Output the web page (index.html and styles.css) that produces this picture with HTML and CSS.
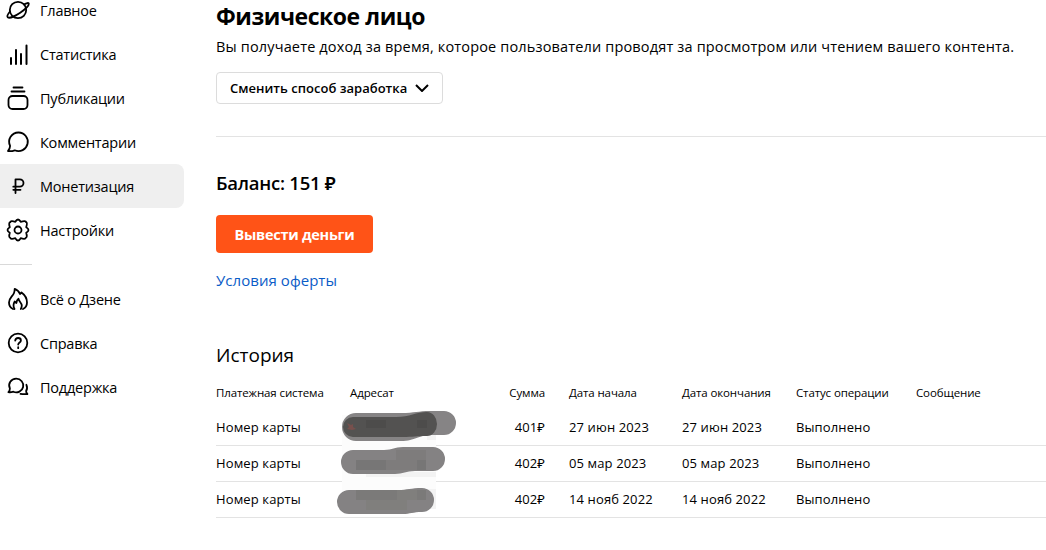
FILE: index.html
```html
<!DOCTYPE html>
<html lang="ru">
<head>
  <meta charset="UTF-8" />
  <meta name="viewport" content="width=device-width, initial-scale=1.0"/>
  <title>Монетизация</title>
  <link rel="stylesheet" href="styles.css">
</head>
<body>

  <nav class="sidebar">
    <a class="menu-item">
      <svg class="icon" viewBox="0 0 24 24"><circle cx="12" cy="12" r="8.2"/><path d="M18 6.500c2.600-1.700 4.700-2 4.800-.7.100 2-3.700 5.600-8.600 8.900-5.400 3.600-11 5.900-12.400 4.600-1-.9 0-3.200 2.200-5.800"/></svg>
      <span>Главное</span>
    </a>
    <a class="menu-item">
      <svg class="icon icon-bars" viewBox="0 0 24 24"><path d="M5 16v6M10 8v14M15 12v10M20.500 3.500v18.500"/></svg>
      <span>Статистика</span>
    </a>
    <a class="menu-item">
      <svg class="icon" viewBox="0 0 24 24"><path d="M7.500 1.500h9M5.500 5.500h13"/><rect x="2.500" y="10" width="19" height="13" rx="4"/></svg>
      <span>Публикации</span>
    </a>
    <a class="menu-item">
      <svg class="icon" viewBox="0 0 24 24"><path d="M12.600 2.500a9.300 9.300 0 1 1-3.900 17.800C6.800 21 4.500 21.500 2 21c1.600-1.500 2-3.200 2.100-5.100A9.300 9.300 0 0 1 12.600 2.500z"/></svg>
      <span>Комментарии</span>
    </a>
    <a class="menu-item active">
      <svg class="icon" viewBox="0 0 24 24"><path d="M9.500 19V5.300h4.300a3.700 3.700 0 0 1 0 7.400H7.300M7.300 15.800H14.500"/></svg>
      <span>Монетизация</span>
    </a>
    <a class="menu-item">
      <svg class="icon" viewBox="0 0 24 24"><circle cx="12" cy="12" r="3.500"/><path d="M9.300 3.800Q12-.8 14.700 3.800 19.800 2.400 20.200 4.200 21.600 4.700 20.200 9.300 24.800 12 20.200 14.700 21.600 19.300 19.800 19.800 19.300 21.600 14.700 20.200 12 24.800 9.300 20.200 4.700 21.600 4.200 19.800 2.400 19.300 3.800 14.700-.8 12 3.800 9.300 2.400 4.700 4.200 4.200 4.700 2.400 9.300 3.800z"/></svg>
      <span>Настройки</span>
    </a>

    <hr class="menu-divider">

    <a class="menu-item">
      <svg class="icon" viewBox="0 0 24 24"><path d="M7 22c-3-1.500-4-3.500-4-6.500 0-4.500 3.500-6 5-9.500C8.700 4.300 8.700 3 8.700 1.800c2.500 1 4.300 2.700 5.300 5.200l1.500-1.500c3.500 2.500 5.500 6 5.500 10 0 3-1 5-4 6.500"/><path d="M8.500 22c-1.700-3-1-5.500.2-7.500l1.700 1.500c.1-2 .9-3.300 2.100-4.200.2 2.500 3.300 4 3.300 6.700 0 1.500-.4 2.500-1 3.500"/></svg>
      <span>Всё о Дзене</span>
    </a>
    <a class="menu-item">
      <svg class="icon" viewBox="0 0 24 24"><circle cx="12" cy="12" r="9.300"/><path d="M9.200 9.700c.2-1.900 1.300-2.700 2.900-2.700 1.700 0 2.800.9 2.800 2.400 0 2-2.700 2.200-2.700 4.200M12.200 16.200v1"/></svg>
      <span>Справка</span>
    </a>
    <a class="menu-item">
      <svg class="icon" viewBox="0 0 24 24"><path d="M10.300 3.700a7 6.800 0 1 1-2.900 13c-1.700.5-3.300.8-5 .4 1.200-1 1.500-2.200 1.500-3.600A7 6.800 0 0 1 10.300 3.700z"/><path d="M20.400 9.800c1 2.200.9 4.300-.3 6.200 0 1.200.5 2.200 1.300 3-2.300.3-4.600.2-6.900-.2"/></svg>
      <span>Поддержка</span>
    </a>
  </nav>

  <main class="content">
    <h1>Физическое лицо</h1>
    <p class="lead">Вы получаете доход за время, которое пользователи проводят за просмотром или чтением вашего контента.</p>
    <button class="btn-select">
      <span>Сменить способ заработка</span>
      <svg class="chevron" viewBox="0 0 14 8"><path d="M1 1l6 6 6-6"/></svg>
    </button>

    <section class="balance">
      <h2>Баланс: 151 ₽</h2>
      <button class="btn-withdraw">Вывести деньги</button>
      <a class="offer">Условия оферты</a>
    </section>

    <section class="history">
      <h3>История</h3>
      <div class="table-wrap">
        <table>
          <colgroup>
            <col class="col-system"><col class="col-address"><col class="col-sum"><col class="col-start"><col class="col-end"><col class="col-status"><col>
          </colgroup>
          <thead>
            <tr>
              <th>Платежная система</th>
              <th>Адресат</th>
              <th class="sum">Сумма</th>
              <th>Дата начала</th>
              <th>Дата окончания</th>
              <th>Статус операции</th>
              <th>Сообщение</th>
            </tr>
          </thead>
          <tbody>
            <tr>
              <td>Номер карты</td><td></td><td class="sum">401₽</td>
              <td>27 июн 2023</td><td>27 июн 2023</td><td>Выполнено</td><td></td>
            </tr>
            <tr>
              <td>Номер карты</td><td></td><td class="sum">402₽</td>
              <td>05 мар 2023</td><td>05 мар 2023</td><td>Выполнено</td><td></td>
            </tr>
            <tr>
              <td>Номер карты</td><td></td><td class="sum">402₽</td>
              <td>14 нояб 2022</td><td>14 нояб 2022</td><td>Выполнено</td><td></td>
            </tr>
          </tbody>
        </table>

        <!-- hidden card numbers -->
        <svg class="mask" viewBox="0 0 130 110">
          <path fill="#fcfcfc" d="M12 10h94v94H12z"/>
          <path fill="#f3f3f3" d="M97 22h9v13h-9zM36 67h70v5H36zM97 84h9v20h-9z"/>
          <path fill="#868485" d="M26 8h45c14 0 17-2 29-2h14a12 12 0 0 1 0 24h-14c-12 0-14 6-29 6H26a14 14 0 0 1 0-28z"/>
          <path fill="#535251" d="M23 12h43c14 0 20-5 31-5a10 12 0 0 1 0 24c-11 0-13 1-25 1H23a10 10 0 0 1 0-20z"/>
          <path fill="#4d4c4b" d="M36 15h20v8H36zM87 15h10v8H87z"/>
          <path fill="#77504d" d="M17 18l4 2 2-1v3l3 2-4 1-5-1 2-2z"/>
          <path fill="#848283" d="M23 45h31c9 0 10-3 19-3h30a12 12 0 0 1 0 24H85c-9 0-12 3-20 3H23a12 12 0 0 1 0-24z"/>
          <path fill="#777676" d="M26 55h30v10H26zM87 55h9v10h-9z"/>
          <path fill="#7e7c7c" d="M56 55h31v10H56zM66 45h30v10H66z"/>
          <path fill="#848283" d="M19 85h49c9 0 13-2 24-2a12 12 0 0 1 0 24c-9 0-12 2-19 2H19a12 12 0 0 1 0-24z"/>
          <path fill="#7b7a79" d="M26 85h41v10H26zM87 85h9v10h-9z"/>
          <path fill="#807f7d" d="M36 95h41v10H36zM67 85h20v10H67z"/>
        </svg>
      </div>
    </section>
  </main>

</body>
</html>
```
FILE: styles.css
```css
* {
  box-sizing: border-box;
}

body {
  margin: 0;
  height: 550px;
  overflow: hidden;
  display: flex;
  align-items: flex-start;
  background: #fff;
  color: #000;
  font-family: 'Open Sans', 'Noto Sans', sans-serif;
  font-size: 15px;
}

/* Sidebar */
.sidebar {
  width: 184px;
  flex-shrink: 0;
  margin-top: -12px;
}

.menu-item {
  display: flex;
  align-items: center;
  gap: 10px;
  height: 44px;
  padding-left: 6px;
  font-size: 14.5px;
  letter-spacing: -0.22px;
  white-space: nowrap;
}

.menu-item.active {
  background: #efefef;
  border-radius: 0 8px 8px 0;
}

.icon {
  width: 24px;
  height: 24px;
  flex-shrink: 0;
  fill: none;
  stroke: #000;
  stroke-width: 1.8;
  stroke-linecap: round;
  stroke-linejoin: round;
  overflow: visible;
}

.icon-bars {
  stroke-width: 2;
}

.menu-divider {
  width: 32px;
  height: 1px;
  margin: 12px 0;
  border: none;
  background: #d9d9d9;
}

/* Content */
.content {
  flex: 1;
  margin-left: 32px;
  white-space: nowrap;
}

h1, h2, h3, p {
  margin: 0;
}

h1 {
  height: 32px;
  line-height: 32px;
  font-size: 23px;
  font-weight: 700;
  letter-spacing: -0.45px;
}

.lead {
  height: 28px;
  line-height: 30px;
  font-size: 14.5px;
  letter-spacing: 0.16px;
}

button {
  display: flex;
  align-items: center;
  font-family: inherit;
  cursor: pointer;
}

.btn-select {
  justify-content: space-between;
  width: 227px;
  height: 32px;
  margin-top: 12px;
  padding: 0 13px;
  background: #fff;
  color: #000;
  border: 1px solid #dcdcdc;
  border-radius: 4px;
  font-size: 13px;
  font-weight: 600;
  letter-spacing: 0.02px;
}

.chevron {
  width: 14px;
  height: 8px;
  fill: none;
  stroke: #000;
  stroke-width: 2;
}

.balance {
  margin-top: 32px;
  padding-top: 32px;
  border-top: 1px solid #e3e3e3;
}

h2 {
  height: 28px;
  line-height: 28px;
  font-size: 18.5px;
  font-weight: 600;
  letter-spacing: -0.25px;
}

.btn-withdraw {
  justify-content: center;
  width: 157px;
  height: 38px;
  margin-top: 18px;
  padding: 0;
  background: #ff5317;
  color: #fff;
  border: none;
  border-radius: 4px;
  font-size: 14.5px;
  font-weight: 700;
  letter-spacing: -0.25px;
}

.offer {
  display: block;
  height: 24px;
  margin-top: 16px;
  line-height: 22px;
  color: #0b5cc7;
  letter-spacing: 0.05px;
}

/* History */
.history {
  margin-top: 48px;
}

h3 {
  height: 28px;
  line-height: 28px;
  font-size: 19px;
  font-weight: 400;
}

.table-wrap {
  position: relative;
  margin-top: 7px;
}

table {
  width: 830px;
  table-layout: fixed;
  border-collapse: separate;
  border-spacing: 0;
}

.col-system { width: 134px; }
.col-address { width: 120px; }
.col-sum { width: 99px; }
.col-start { width: 113px; }
.col-end { width: 114px; }
.col-status { width: 120px; }

th {
  height: 34px;
  padding: 0 0 2px;
  font-size: 11.5px;
  font-weight: 400;
  letter-spacing: -0.12px;
  text-align: left;
}

td {
  height: 36px;
  padding: 0 0 2px;
  border-bottom: 1px solid #e3e3e3;
  font-size: 13px;
  letter-spacing: 0.12px;
}

th.sum, td.sum {
  padding-right: 24px;
  text-align: right;
}

.mask {
  position: absolute;
  left: 114px;
  top: 29px;
  width: 130px;
  height: 110px;
}
```
